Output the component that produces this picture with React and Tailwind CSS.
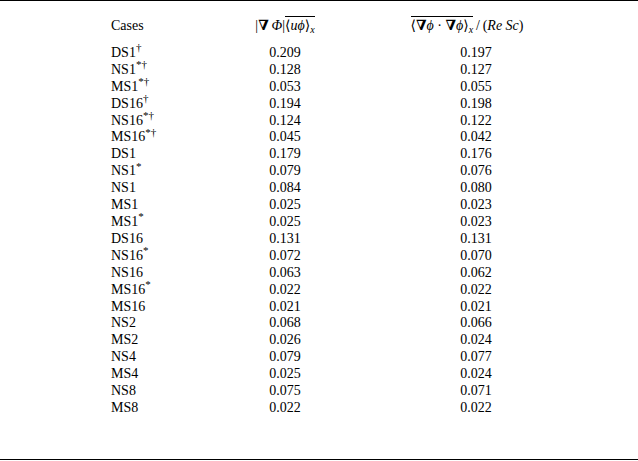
const rows = [
  ['DS1', '†', '0.209', '0.197'],
  ['NS1', '*†', '0.128', '0.127'],
  ['MS1', '*†', '0.053', '0.055'],
  ['DS16', '†', '0.194', '0.198'],
  ['NS16', '*†', '0.124', '0.122'],
  ['MS16', '*†', '0.045', '0.042'],
  ['DS1', '', '0.179', '0.176'],
  ['NS1', '*', '0.079', '0.076'],
  ['NS1', '', '0.084', '0.080'],
  ['MS1', '', '0.025', '0.023'],
  ['MS1', '*', '0.025', '0.023'],
  ['DS16', '', '0.131', '0.131'],
  ['NS16', '*', '0.072', '0.070'],
  ['NS16', '', '0.063', '0.062'],
  ['MS16', '*', '0.022', '0.022'],
  ['MS16', '', '0.021', '0.021'],
  ['NS2', '', '0.068', '0.066'],
  ['MS2', '', '0.026', '0.024'],
  ['NS4', '', '0.079', '0.077'],
  ['MS4', '', '0.025', '0.024'],
  ['NS8', '', '0.075', '0.071'],
  ['MS8', '', '0.022', '0.022'],
];

const Over = ({ children }) => (
  <span className="inline-block border-t border-black leading-[15px] pt-px">{children}</span>
);

export default function App() {
  return (
    <div
      className="w-[638px] h-[460px] bg-white text-black border-t border-b border-black text-[14px] leading-[16.9px]"
      style={{ fontFamily: '"Liberation Serif", "DejaVu Serif", serif' }}
    >
      <div className="pt-[15px]">
        <div className="grid grid-cols-[111px_110px_128px_254px] items-end">
          <div />
          <div>Cases</div>
          <div className="text-center">
            |<b>∇</b>&thinsp;
            <i>Φ</i>|
            <Over>
              ⟨<i>uϕ</i>⟩<sub className="italic text-[10px]">x</sub>
            </Over>
          </div>
          <div className="text-center pr-[18px]">
            <Over>
              ⟨<b>∇</b>
              <i>ϕ</i> · <b>∇</b>
              <i>ϕ</i>⟩<sub className="italic text-[10px]">x</sub>
            </Over>
            &thinsp;/&thinsp;(<i>Re Sc</i>)
          </div>
        </div>
        <div className="mt-[10px]">
          {rows.map(([name, mark, a, b], i) => (
            <div key={i} className="grid grid-cols-[111px_110px_128px_254px]">
              <div />
              <div>
                {name}
                {mark && <sup className="text-[11px]">{mark}</sup>}
              </div>
              <div className="text-center">{a}</div>
              <div className="text-center">{b}</div>
            </div>
          ))}
        </div>
      </div>
    </div>
  );
}
